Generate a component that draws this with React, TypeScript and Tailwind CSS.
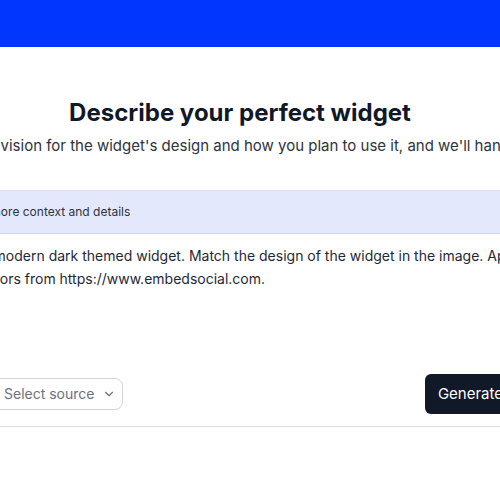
import React from "react";
import { ChevronDown } from "lucide-react";

export default function App() {
  return (
    <div className="w-[500px] h-[480px] overflow-hidden bg-white font-['Inter',sans-serif]">
      <div className="h-[47px] bg-[#0036ff]" />
      <div className="w-[900px] ml-[-210px] flex flex-col items-center pt-[50px]">
        <h1 className="text-2xl leading-8 font-bold text-[#111827]">
          Describe your perfect widget
        </h1>
        <p className="mt-[5px] ml-6 text-[15px] leading-6 text-[#2d3340] whitespace-nowrap">
          Share your vision for the widget's design and how you plan to use it, and we'll handle the rest.
        </p>
        <div className="mt-8 w-[600px] border-t border-[#dfe3f3] border-b border-b-[#dcdfe3]">
          <div className="h-[43px] bg-[#e4e8fc] border-b border-[#d3d8ee] pl-6 flex items-center text-xs text-[#2d3340]">
            Add more context and details
          </div>
          <div className="pl-10 pr-3 pt-[10px] h-[140px] text-sm leading-[23px] text-[#1f2937]">
            A modern dark themed widget. Match the design of the widget in the image. Apply colors from https://www.embedsocial.com.
          </div>
          <div className="flex items-center justify-between pl-10 pr-[24px] pb-3">
            <button className="h-[32px] flex items-center gap-2 pl-[23px] pr-[6px] border border-[#d1d5db] rounded-lg text-sm text-[#6b7280] bg-white">
              Select source
              <ChevronDown size={14} strokeWidth={2} className="text-[#6b7280]" />
            </button>
            <button className="h-[40px] px-[13px] rounded-md bg-[#111827] text-[15px] text-white">
              Generate
            </button>
          </div>
        </div>
      </div>
    </div>
  );
}
